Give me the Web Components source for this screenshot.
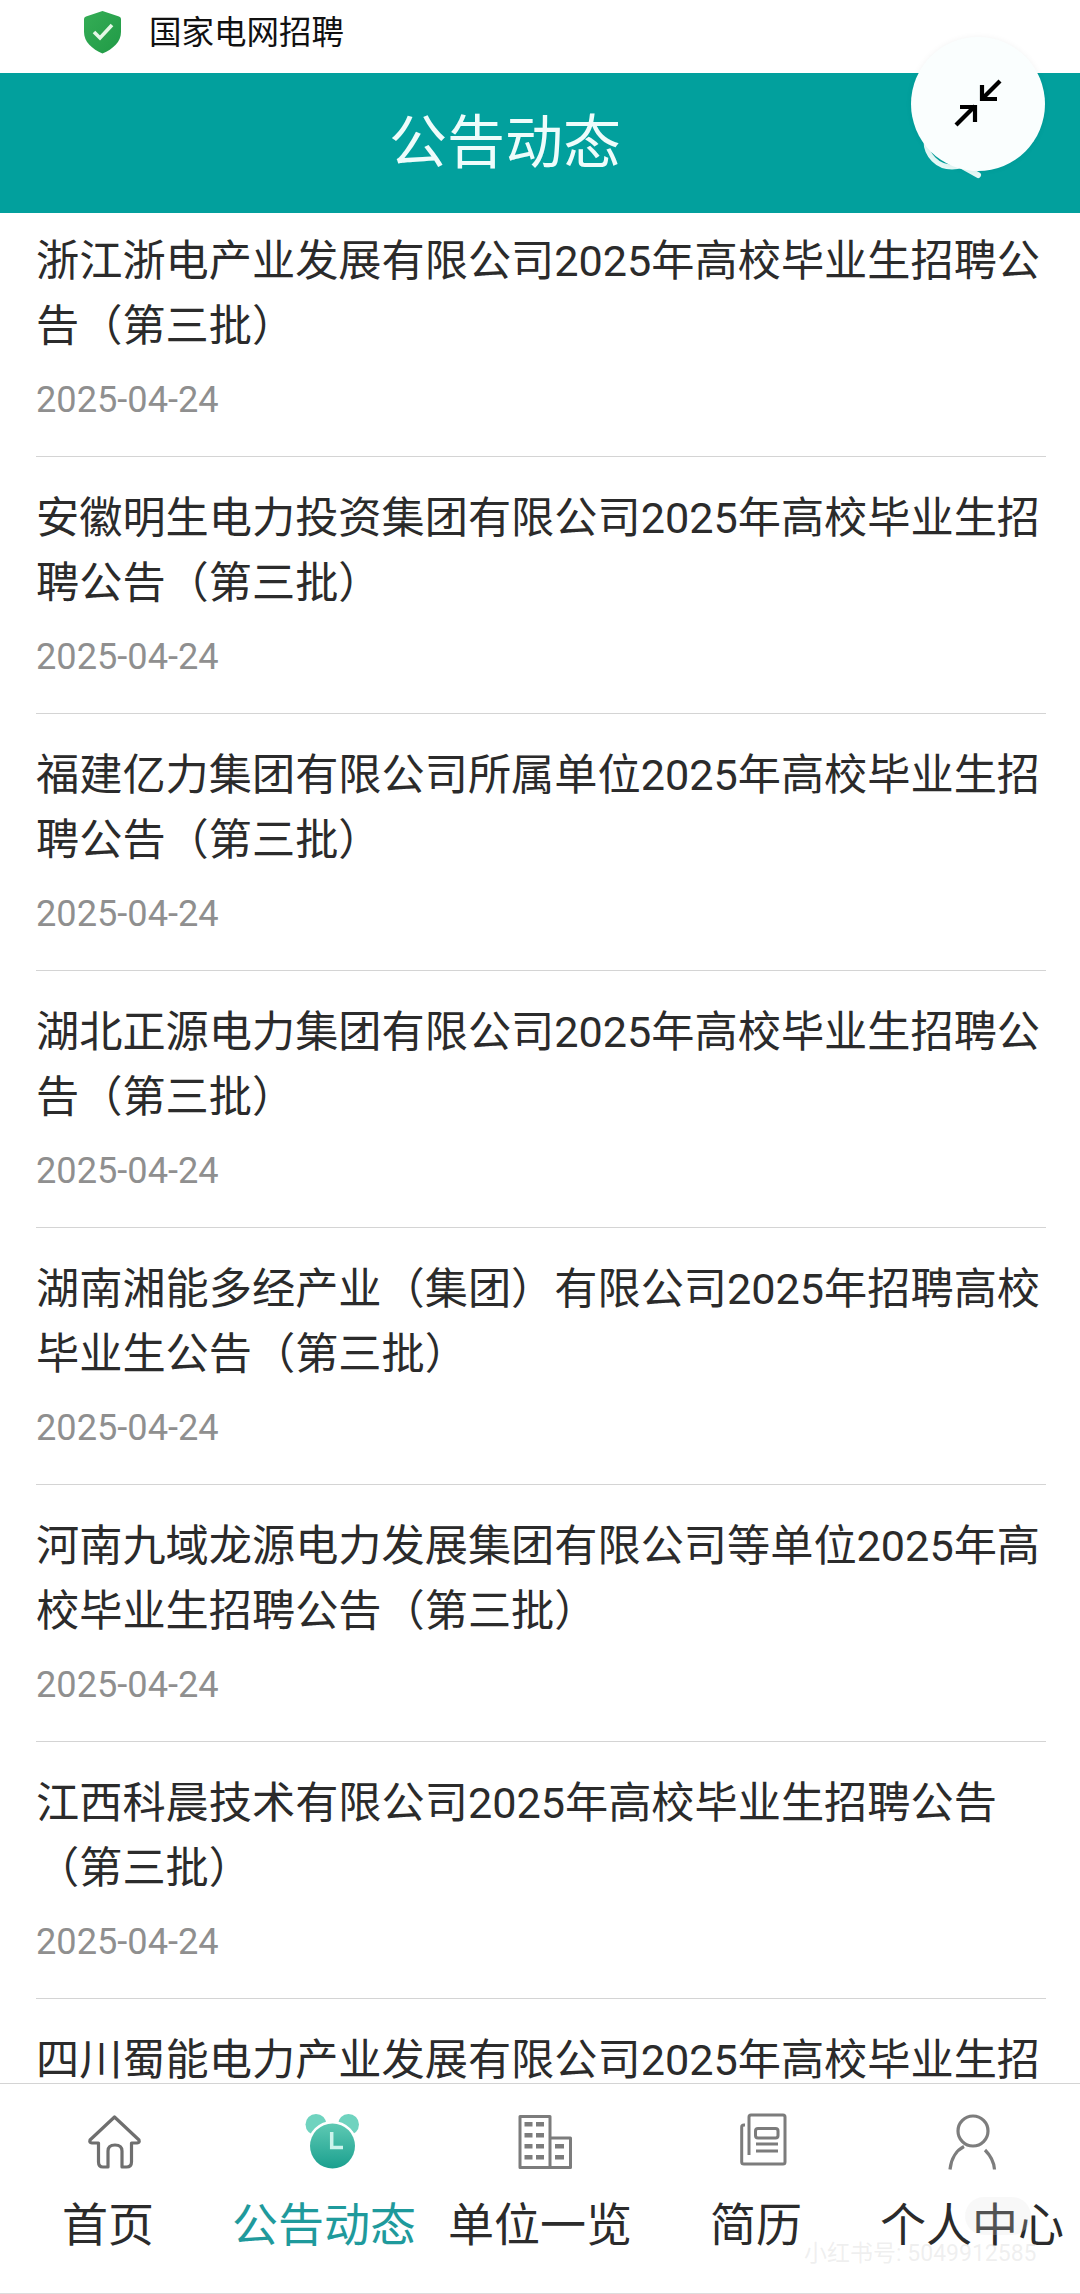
<!DOCTYPE html>
<html lang="zh">
<head>
<meta charset="utf-8">
<title>公告动态</title>
<style>
	html, body { margin: 0; background: #fff; }
	body { font-family: Roboto, "Noto Sans CJK SC", sans-serif; }
</style>
</head>
<body>
<app-shell>
	<site-bar slot="site">国家电网招聘</site-bar>
	<title-bar slot="title">公告动态</title-bar>
	<notice-item>浙江浙电产业发展有限公司2025年高校毕业生招聘公告（第三批）</notice-item>
	<notice-item>安徽明生电力投资集团有限公司2025年高校毕业生招聘公告（第三批）</notice-item>
	<notice-item>福建亿力集团有限公司所属单位2025年高校毕业生招聘公告（第三批）</notice-item>
	<notice-item>湖北正源电力集团有限公司2025年高校毕业生招聘公告（第三批）</notice-item>
	<notice-item>湖南湘能多经产业（集团）有限公司2025年招聘高校毕业生公告（第三批）</notice-item>
	<notice-item>河南九域龙源电力发展集团有限公司等单位2025年高校毕业生招聘公告（第三批）</notice-item>
	<notice-item>江西科晨技术有限公司2025年高校毕业生招聘公告（第三批）</notice-item>
	<notice-item>四川蜀能电力产业发展有限公司2025年高校毕业生招聘公告（第三批）</notice-item>
	<bottom-nav slot="nav"></bottom-nav>
</app-shell>

<script>
(()=> {
	const FONT = 'Roboto, "Noto Sans CJK SC", sans-serif';

	class AppShell extends HTMLElement {
		constructor() {
			super();
			this.attachShadow({ mode: 'open' }).innerHTML = `
				<style>
					:host { display: flex; flex-direction: column; width: 1080px; height: 2294px; overflow: hidden; background: #fff; font-family: ${FONT}; }
					.list { flex: 1; min-height: 0; overflow: hidden; }
					.scroll { margin-top: -13px; }
				</style>
				<slot name="site"></slot>
				<slot name="title"></slot>
				<div class="list"><div class="scroll"><slot></slot></div></div>
				<slot name="nav"></slot>
			`;
		}
	}
	customElements.define('app-shell', AppShell);

	class SiteBar extends HTMLElement {
		constructor() {
			super();
			this.attachShadow({ mode: 'open' }).innerHTML = `
				<style>
					:host { display: flex; align-items: center; box-sizing: border-box; height: 73px; padding: 0 0 14px 83px; background: #fff; color: #111; font-size: 32.500px; }
					svg { width: 39px; height: 44px; margin: 4px 27px 0 0; }
				</style>
				<svg viewBox="0 0 39 44">
					<defs><linearGradient id="sg" x1="0" y1="0" x2="1" y2="1"><stop offset="0" stop-color="#35ad56"/><stop offset="1" stop-color="#209a46"/></linearGradient></defs>
					<path d="M19.500 1 L36 6.500 Q38 7.200 38 9 V22 C38 32 30 39 19.500 43.500 C9 39 1 32 1 22 V9 Q1 7.200 3 6.500 Z" fill="url(#sg)"/>
					<path d="M11 22 L17 28 L29 15" fill="none" stroke="#e4f7e6" stroke-width="3.600"/>
				</svg>
				<slot></slot>
			`;
		}
	}
	customElements.define('site-bar', SiteBar);

	class TitleBar extends HTMLElement {
		constructor() {
			super();
			this.attachShadow({ mode: 'open' }).innerHTML = `
				<style>
					:host { display: block; position: relative; height: 140px; background: #02a09d; }
					.text { display: flex; align-items: center; justify-content: center; box-sizing: border-box; height: 100%; padding: 0 70px 10px 0; color: #eefcfb; font-size: 58px; }
					.search { position: absolute; left: 905px; top: 30px; width: 90px; height: 90px; overflow: visible; }
					.float { position: absolute; left: 911px; top: -36px; width: 134px; height: 134px; border-radius: 50%; background: #fafefe; box-shadow: 0 0 6px rgba(0,0,0,.05); }
					.float svg { display: block; width: 134px; height: 134px; }
				</style>
				<div class="text"><slot></slot></div>
				<svg class="search" viewBox="0 0 90 90">
					<circle cx="47" cy="38" r="26" fill="none" stroke="#e4f8f6" stroke-width="5"/>
					<path d="M55 62 L73 72" fill="none" stroke="#e4f8f6" stroke-width="6" stroke-linecap="round"/>
				</svg>
				<div class="float">
					<svg viewBox="0 0 134 134">
						<g fill="none" stroke="#000" stroke-width="4.200">
							<path d="M45 88 L64 69"/>
							<path d="M49 70 H64 V85"/>
							<path d="M89 44 L71 62"/>
							<path d="M71 48 V62 H86"/>
						</g>
					</svg>
				</div>
			`;
		}
	}
	customElements.define('title-bar', TitleBar);

	class NoticeItem extends HTMLElement {
		constructor() {
			super();
			this.attachShadow({ mode: 'open' }).innerHTML = `
				<style>
					:host { display: block; box-sizing: border-box; height: 257px; margin: 0 34px 0 36px; padding-top: 29px; border-bottom: 1px solid #d4d4d4; }
					.title { font-size: 43.200px; line-height: 65px; color: #2b2b2b; height: 130px; }
					.date { margin-top: 20px; font-size: 36.200px; line-height: 42px; color: #8f8f8f; }
				</style>
				<div class="title"><slot></slot></div>
				<div class="date">2025-04-24</div>
			`;
		}
	}
	customElements.define('notice-item', NoticeItem);

	const NAV = [
		{ label: '首页', dx: 6, icon: `<path d="M29.500 4 L54 27 Q55 29.500 52 30 H46.500 V49 Q46.500 54 41.500 54 H37 V38 Q37 32 30 32 Q23 32 23 38 V54 H18 Q13.500 54 13.500 49 V30 H7 Q4 29.500 5 27 Z" fill="none" stroke="#6f6f6f" stroke-width="3.200" stroke-linejoin="round"/>` },
		{ label: '公告动态', dx: 9, active: true, icon: `
			<defs><linearGradient id="cg" x1="0" y1="0" x2="0" y2="1"><stop offset="0" stop-color="#5ec9b3"/><stop offset="1" stop-color="#1ba08f"/></linearGradient></defs>
			<circle cx="12" cy="11.500" r="10.500" fill="#6fd3bf"/>
			<circle cx="44.500" cy="11.500" r="10.500" fill="#6fd3bf"/>
			<circle cx="28.500" cy="33" r="22.500" fill="url(#cg)" stroke="#fff" stroke-width="5" paint-order="stroke"/>
			<path d="M27.700 19 V34.500 H39" fill="none" stroke="#cdf3ec" stroke-width="3.500"/>` },
		{ label: '单位一览', dx: 4, icon: `
			<g fill="none" stroke="#7c7c7c" stroke-width="3" stroke-linejoin="round"><path d="M5 54.500 V3.500 H35 V54.500 Z"/><path d="M35 25 H55.500 V54.500 H35"/></g>
			<g fill="#7c7c7c"><rect x="9.500" y="9" width="8" height="4.500"/><rect x="21" y="9" width="8" height="4.500"/><rect x="9.500" y="20" width="8" height="4.500"/><rect x="21" y="20" width="8" height="4.500"/><rect x="9.500" y="31" width="8" height="4.500"/><rect x="21" y="31" width="8" height="4.500"/><rect x="9.500" y="42" width="8" height="4.500"/><rect x="21" y="42" width="8" height="4.500"/><rect x="40" y="31" width="9" height="4.500"/><rect x="40" y="42" width="9" height="4.500"/></g>` },
		{ label: '简历', dx: 7, icon: `
			<g fill="none" stroke="#7c7c7c" stroke-width="3" stroke-linejoin="round">
				<path d="M15 42 V4 Q15 2 17 2 H49 Q51 2 51 4 V49 Q51 51 49 51 H10 Q7.700 51 7.700 49 V14 Q7.700 12 10 12 H11"/>
				<rect x="21.500" y="15.500" width="22.500" height="9.500" rx="2.500"/>
				<path d="M22 31 H44 M22 38 H44"/>
			</g>` },
		{ label: '个人中心', dx: 0, icon: `
			<g fill="none" stroke="#7d7d7d" stroke-width="3.200">
				<circle cx="30" cy="18" r="15"/>
				<path d="M7 56.500 C8 45 14 37 21 33.500"/>
				<path d="M42 37 C47 42 51 49 51.500 56.500"/>
			</g>` },
	];

	class BottomNav extends HTMLElement {
		constructor() {
			super();
			const cells = NAV.map(n => `
				<div class="cell${n.active ? ' on' : ''}">
					<svg viewBox="0 0 58 58" style="margin-left:${n.dx * 2}px">${n.icon}</svg>
					<span>${n.label}</span>
				</div>`).join('');
			this.attachShadow({ mode: 'open' }).innerHTML = `
				<style>
					:host { display: block; position: relative; box-sizing: border-box; height: 211px; background: #fff; border-top: 1px solid #d4d4d4; border-bottom: 1px solid #ddd; }
					.row { display: grid; grid-template-columns: repeat(5, 1fr); }
					.cell { display: flex; flex-direction: column; align-items: center; padding-top: 29px; color: #2b2b2b; font-size: 46px; white-space: nowrap; }
					.cell.on { color: #1f9a9c; }
					.cell svg { width: 58px; height: 58px; margin-bottom: 21px; overflow: visible; }
					.cell span { line-height: 66px; }
					.pill { position: absolute; left: 965px; top: 113px; width: 66px; height: 38px; border-radius: 19px; background: rgba(225,225,225,.22); }
					.mark { position: absolute; left: 804px; top: 156px; font-size: 23px; line-height: 28px; color: rgba(200,200,200,.28); white-space: nowrap; }
				</style>
				<div class="row">${cells}</div>
				<div class="pill"></div>
				<div class="mark">小红书号: 5049912585</div>
			`;
		}
	}
	customElements.define('bottom-nav', BottomNav);
})();
</script>
</body>
</html>
